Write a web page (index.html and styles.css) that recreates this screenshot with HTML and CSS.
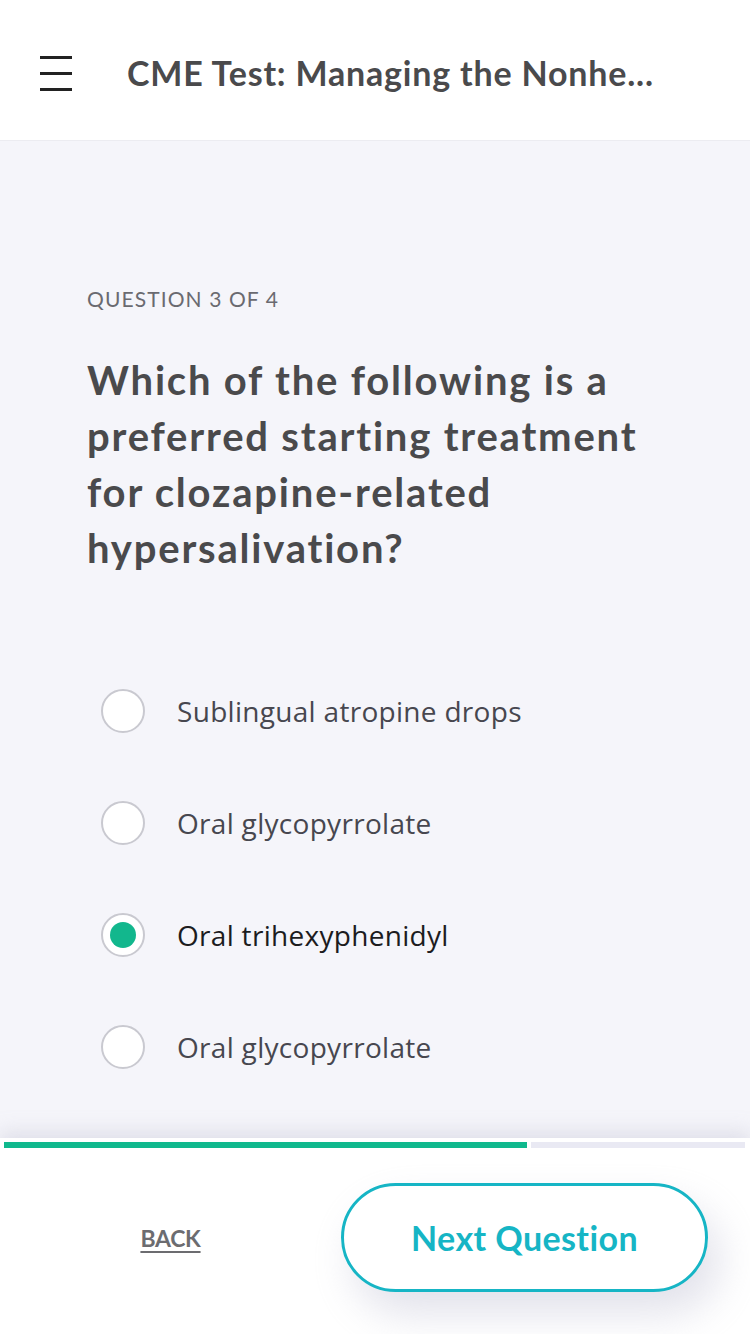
FILE: index.html
```html
<!DOCTYPE html>
<html lang="en">
<head>
<meta charset="utf-8">
<title>CME Test</title>
<link rel="stylesheet" href="styles.css">
</head>
<body>
<div class="app">
  <header class="topbar">
    <button class="menu" aria-label="Menu">
      <svg width="32" height="36" viewBox="0 0 32 36"><rect x="0" y="3" width="32" height="3" fill="#222"/><rect x="0" y="19" width="32" height="3" fill="#222"/><rect x="0" y="35" width="32" height="3" fill="#222"/></svg>
    </button>
    <h1 class="title">CME Test: Managing the Nonhe...</h1>
  </header>
  <main class="content">
    <p class="counter">QUESTION 3 OF 4</p>
    <h2 class="question">Which of the following is a preferred starting treatment for clozapine-related hypersalivation?</h2>
    <ul class="options">
      <li class="option"><span class="radio"></span><span class="label">Sublingual atropine drops</span></li>
      <li class="option"><span class="radio"></span><span class="label">Oral glycopyrrolate</span></li>
      <li class="option selected"><span class="radio"><span class="dot"></span></span><span class="label">Oral trihexyphenidyl</span></li>
      <li class="option"><span class="radio"></span><span class="label">Oral glycopyrrolate</span></li>
    </ul>
  </main>
  <footer class="footer">
    <div class="progress">
      <div class="progress-done"></div>
      <div class="progress-rest"></div>
    </div>
    <div class="actions">
      <a class="back" href="#">BACK</a>
      <button class="next">Next Question</button>
    </div>
  </footer>
</div>
</body>
</html>
```
FILE: styles.css
```css
* { box-sizing: border-box; }
html, body { margin: 0; padding: 0; }
body {
  width: 750px;
  height: 1334px;
  overflow: hidden;
  background: #ffffff;
  font-family: "Lato", "Noto Sans", sans-serif;
}
.app {
  display: flex;
  flex-direction: column;
  height: 1334px;
}
.topbar {
  height: 141px;
  flex: none;
  display: flex;
  align-items: center;
  gap: 55px;
  padding: 0 0 0 40px;
  background: #fff;
  border-bottom: 1px solid #ececf1;
}
.menu {
  border: 0;
  background: none;
  padding: 0;
  width: 32px;
  height: 41px;
  display: flex;
  align-items: flex-start;
  margin-top: 6px;
}
.menu svg { display: block; overflow: visible; }
.title {
  margin: 0;
  font-size: 34px;
  font-weight: 700;
  color: #4a4a4c;
  letter-spacing: 0.8px;
  white-space: nowrap;
  margin-top: 4px;
}
.content {
  flex: 1;
  background: #f5f5fa;
  padding: 146px 87px 0 87px;
}
.counter {
  margin: 0;
  font-size: 21px;
  line-height: 24px;
  font-weight: 400;
  color: #6a6a70;
  letter-spacing: 1.1px;
}
.question {
  margin: 41px 0 0 0;
  font-size: 40px;
  line-height: 56px;
  font-weight: 700;
  color: #4a4a4c;
  letter-spacing: 1.8px;
  width: 576px;
}
.options {
  list-style: none;
  margin: 79px 0 0 14px;
  padding: 0;
  display: flex;
  flex-direction: column;
}
.option {
  height: 112px;
  display: flex;
  align-items: center;
  gap: 32px;
}
.radio {
  width: 44px;
  height: 44px;
  border-radius: 50%;
  background: #fff;
  border: 2px solid #c9c9d0;
  display: flex;
  align-items: center;
  justify-content: center;
  flex: none;
}
.dot {
  width: 26px;
  height: 26px;
  border-radius: 50%;
  background: #12b78d;
}
.label {
  font-family: "Open Sans", "Noto Sans", sans-serif;
  font-size: 28px;
  letter-spacing: 0.3px;
  color: #47474f;
}
.selected .label { color: #1c1c1e; }
.footer {
  flex: none;
  height: 196px;
  background: #fff;
  box-shadow: 0 -6px 18px rgba(180, 180, 200, 0.35);
  position: relative;
  padding-top: 4px;
}
.progress {
  display: flex;
  gap: 4px;
  padding: 0 5px 0 4px;
  height: 6px;
}
.progress-done { width: 523px; background: #0fb88d; }
.progress-rest { flex: 1; background: #e9e9f3; }
.actions {
  display: flex;
  align-items: center;
  height: 109px;
  margin-top: 35px;
}
.back {
  width: 341px;
  text-align: center;
  font-size: 23px;
  font-weight: 700;
  color: #6c6c70;
  text-decoration: underline;
  text-underline-offset: 4px;
  text-decoration-thickness: 2px;
  letter-spacing: -0.3px;
}
.next {
  width: 367px;
  height: 109px;
  border: 3px solid #16b5c5;
  border-radius: 55px;
  background: #fff;
  color: #16b5c5;
  font-family: "Lato", "Noto Sans", sans-serif;
  font-size: 34px;
  font-weight: 700;
  letter-spacing: 0.4px;
  box-shadow: 12px 22px 40px rgba(190, 190, 210, 0.45);
}
```
